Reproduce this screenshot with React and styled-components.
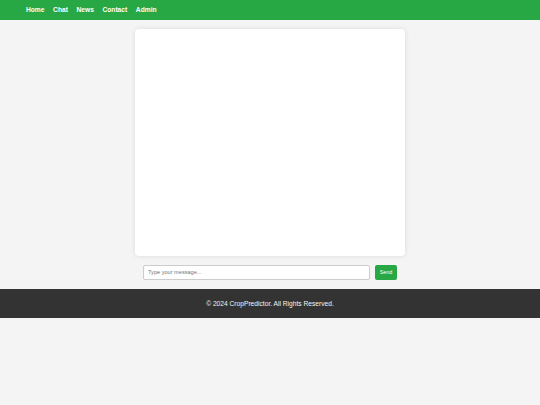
import React, { useState } from 'react';
import styled, { createGlobalStyle } from 'styled-components';

const GlobalStyle = createGlobalStyle`
  * {
    box-sizing: border-box;
  }

  body {
    margin: 0;
    background-color: #f4f4f4;
    font-family: "Liberation Sans", Arial, sans-serif;
  }
`;

const App = () => {
    const [message, setMessage] = useState('');
    const [messages, setMessages] = useState([]);

    const handleSend = () => {
        if (!message.trim()) return;
        setMessages([...messages, message]);
        setMessage('');
    };

    return (
        <>
            <GlobalStyle />
            <Header>
                <Nav>
                    <NavLink href="#">Home</NavLink>
                    <NavLink href="#">Chat</NavLink>
                    <NavLink href="#">News</NavLink>
                    <NavLink href="#">Contact</NavLink>
                    <NavLink href="#">Admin</NavLink>
                </Nav>
            </Header>
            <Main>
                <ChatBox>
                    {messages.map((msg, index) => (
                        <Message key={index}>{msg}</Message>
                    ))}
                </ChatBox>
                <InputRow>
                    <MessageInput
                        type="text"
                        placeholder="Type your message..."
                        value={message}
                        onChange={(e) => setMessage(e.target.value)}
                    />
                    <SendButton onClick={handleSend}>Send</SendButton>
                </InputRow>
            </Main>
            <Footer>
                <p>&copy; 2024 CropPredictor. All Rights Reserved.</p>
            </Footer>
        </>
    );
};

// Styled Components
const Header = styled.header`
  background-color: #28a745;
  height: 19.5px;
  padding: 0 26px;
  display: flex;
  align-items: center;
`;

const Nav = styled.nav`
  display: flex;
  gap: 8.6px;
`;

const NavLink = styled.a`
  color: #fff;
  text-decoration: none;
  font-weight: bold;
  font-size: 6.67px;
`;

const Main = styled.main`
  width: 270px;
  margin: 9.5px auto 0;
  display: flex;
  flex-direction: column;
`;

const ChatBox = styled.div`
  height: 226.5px;
  background-color: #fff;
  border-radius: 4px;
  box-shadow: 0 0 5px rgba(0, 0, 0, 0.1);
  padding: 8px;
  overflow-y: auto;
`;

const Message = styled.div`
  font-size: 6.67px;
  margin-bottom: 4px;
`;

const InputRow = styled.div`
  display: flex;
  gap: 4.7px;
  padding: 9px 8px 8.5px;
`;

const MessageInput = styled.input`
  flex: 1;
  height: 15px;
  padding: 0 4px;
  border: 0.5px solid #ccc;
  border-radius: 2px;
  font-family: "Liberation Sans", Arial, sans-serif;
  font-size: 5.6px;
  outline: none;

  &::placeholder {
    color: #757575;
  }
`;

const SendButton = styled.button`
  width: 22px;
  height: 15.5px;
  padding: 0;
  border: none;
  border-radius: 2px;
  background-color: #28a745;
  color: #fff;
  font-family: "Liberation Sans", Arial, sans-serif;
  font-size: 5.4px;
  cursor: pointer;
`;

const Footer = styled.footer`
  background-color: #333;
  color: #f4f4f4;
  height: 29px;
  display: flex;
  align-items: center;
  justify-content: center;
  font-size: 6.67px;

  p {
    margin: 0;
  }
`;

export default App;
